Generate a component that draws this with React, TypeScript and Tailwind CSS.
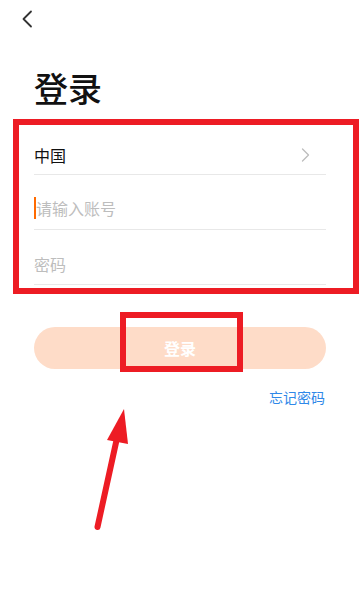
import React from "react";

const font = { fontFamily: '"Noto Sans CJK SC", "Noto Sans", sans-serif' };

const BackIcon = () => (
  <svg width="12" height="18" viewBox="0 0 12 18" fill="none">
    <path d="M10 1.5 2.5 9l7.5 7.5" stroke="#333" strokeWidth="1.8" strokeLinecap="round" strokeLinejoin="round" />
  </svg>
);

const ChevronRight = () => (
  <svg width="9" height="14" viewBox="0 0 9 14" fill="none">
    <path d="M1.5 1 7.5 7l-6 6" stroke="#bdbdbd" strokeWidth="1.3" strokeLinecap="round" strokeLinejoin="round" />
  </svg>
);

export default function App() {
  return (
    <div className="relative w-[360px] h-[612px] bg-white overflow-hidden" style={font}>
      {/* top bar */}
      <div className="h-[38px] pl-[21px] flex items-center">
        <BackIcon />
      </div>

      {/* title */}
      <h1 className="mt-[30px] ml-[34px] text-[34px] leading-[40px] font-medium text-[#111]">登录</h1>

      {/* form (highlighted) */}
      <div className="mt-[11px] ml-[13px] w-[346px] border-[6px] border-[#ed1c24] pl-[15px] pr-[27px] pb-[3px]">
        <div className="h-[50px] pt-[20px] border-b border-[#e8e8e8] flex items-start justify-between">
          <span className="text-[16px] leading-[20px] text-[#111]">中国</span>
          <span className="mr-[16px] pt-[3px]">
            <ChevronRight />
          </span>
        </div>
        <div className="h-[55px] pt-[23px] border-b border-[#e8e8e8] flex items-start">
          <span className="w-[2px] h-[22px] -mt-[1px] bg-[#ff6a00]" />
          <span className="text-[16px] leading-[20px] text-[#bdbdbd]">请输入账号</span>
        </div>
        <div className="h-[55px] pt-[22px] border-b border-[#e8e8e8]">
          <span className="text-[16px] leading-[20px] text-[#bdbdbd]">密码</span>
        </div>
      </div>

      {/* login button */}
      <div className="mt-[33px] mx-[34px] h-[42px] rounded-full bg-[#fedcc8] flex items-center justify-center">
        <span className="text-[16px] font-bold text-white">登录</span>
      </div>

      <div className="mt-[18px] mr-[35px] flex justify-end">
        <span className="text-[14px] leading-[20px] text-[#2f88e8]">忘记密码</span>
      </div>

      {/* annotation: box over button */}
      <div className="absolute left-[120px] top-[312px] w-[123px] h-[60px] border-[6px] border-[#ed1c24]" />

      {/* annotation: arrow */}
      <svg className="absolute left-0 top-0" width="360" height="612" viewBox="0 0 360 612" fill="none">
        <path d="M97.5 527 117 438" stroke="#ed1c24" strokeWidth="6" strokeLinecap="round" />
        <path d="M124 409 107 440 128 444Z" fill="#ed1c24" />
      </svg>
    </div>
  );
}
